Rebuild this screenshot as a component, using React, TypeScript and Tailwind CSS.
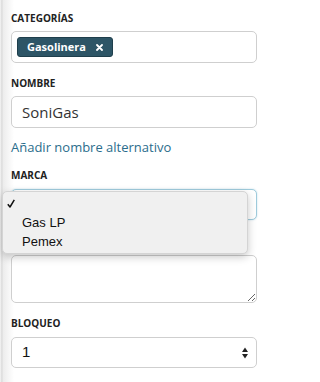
import React from "react";

const label = "block text-[10px] font-bold leading-[14px] text-[#222]";
const box = "w-full rounded-[5px] border border-[#cfcfcf] bg-white";

const Arrows = () => (
  <svg width="6" height="12" viewBox="0 0 6 12" className="absolute right-[8px] top-1/2 -translate-y-1/2">
    <path d="M0 5 L3 0.5 L6 5 Z" fill="#222" />
    <path d="M0 7 L3 11.5 L6 7 Z" fill="#222" />
  </svg>
);

export default function App() {
  return (
    <div
      className="min-h-[382px] w-[260px] bg-[linear-gradient(to_right,#f6f6f6_0px,#d8d8d8_2px,#ececec_3px,#ffffff_14px)] pl-[11px] pr-[3px] pt-[11px]"
      style={{ fontFamily: '"Open Sans", sans-serif' }}
    >
      <span className={label}>CATEGORÍAS</span>
      <div className={`${box} mt-[6px] flex h-[32px] items-center px-[5px]`}>
        <span className="flex h-[20px] items-center gap-[10px] rounded-[3px] border border-[#1f3f4c] bg-[#2d5566] pl-[9px] pr-[9px] text-[11px] font-bold text-white">
          Gasolinera
          <svg width="7" height="7" viewBox="0 0 7 7">
            <path d="M1 1 L6 6 M6 1 L1 6" stroke="#fff" strokeWidth="1.8" strokeLinecap="round" />
          </svg>
        </span>
      </div>

      <span className={`${label} mt-[13px]`}>NOMBRE</span>
      <div className={`${box} mt-[6px] flex h-[32px] items-center px-[10px] text-[15px] text-[#333]`}>
        SoniGas
      </div>

      <a className="mt-[9px] block text-[13px] leading-[20px] text-[#2b6d8c]">Añadir nombre alternativo</a>

      <span className={`${label} mt-[11px]`}>MARCA</span>
      <div className="relative mt-[7px]">
        <div className="relative h-[31px] w-full rounded-[5px] border border-[#9fcbdc] bg-white shadow-[0_0_2px_rgba(100,170,200,0.4)]">
          <Arrows />
        </div>
        <div
          className="absolute left-[-9px] top-[2px] z-10 w-[246px] rounded-[5px] border border-[#d4d4d4] bg-[#f0f0f0] py-[2px] text-[13px] text-[#111] shadow-[0_3px_8px_rgba(0,0,0,0.22)]"
          style={{ fontFamily: '"Liberation Sans", Arial, sans-serif' }}
        >
          <div className="flex h-[19px] items-center pl-[4px]">
            <svg width="8" height="9" viewBox="0 0 8 9">
              <path d="M0.8 5.2 L3 8 L7.3 0.8" stroke="#111" strokeWidth="1.5" fill="none" strokeLinejoin="round" />
            </svg>
          </div>
          <div className="flex h-[19px] items-center pl-[19px]">Gas LP</div>
          <div className="flex h-[19px] items-center pl-[19px]">Pemex</div>
        </div>
      </div>

      <div className="h-[35px]" />
      <textarea className={`${box} block h-[48px] resize-y outline-none`} />

      <span className={`${label} mt-[13px]`}>BLOQUEO</span>
      <div
        className={`${box} relative mt-[7px] flex h-[31px] items-center px-[10px] text-[15px] text-[#111]`}
        style={{ fontFamily: '"Liberation Sans", Arial, sans-serif' }}
      >
        1
        <Arrows />
      </div>
    </div>
  );
}
